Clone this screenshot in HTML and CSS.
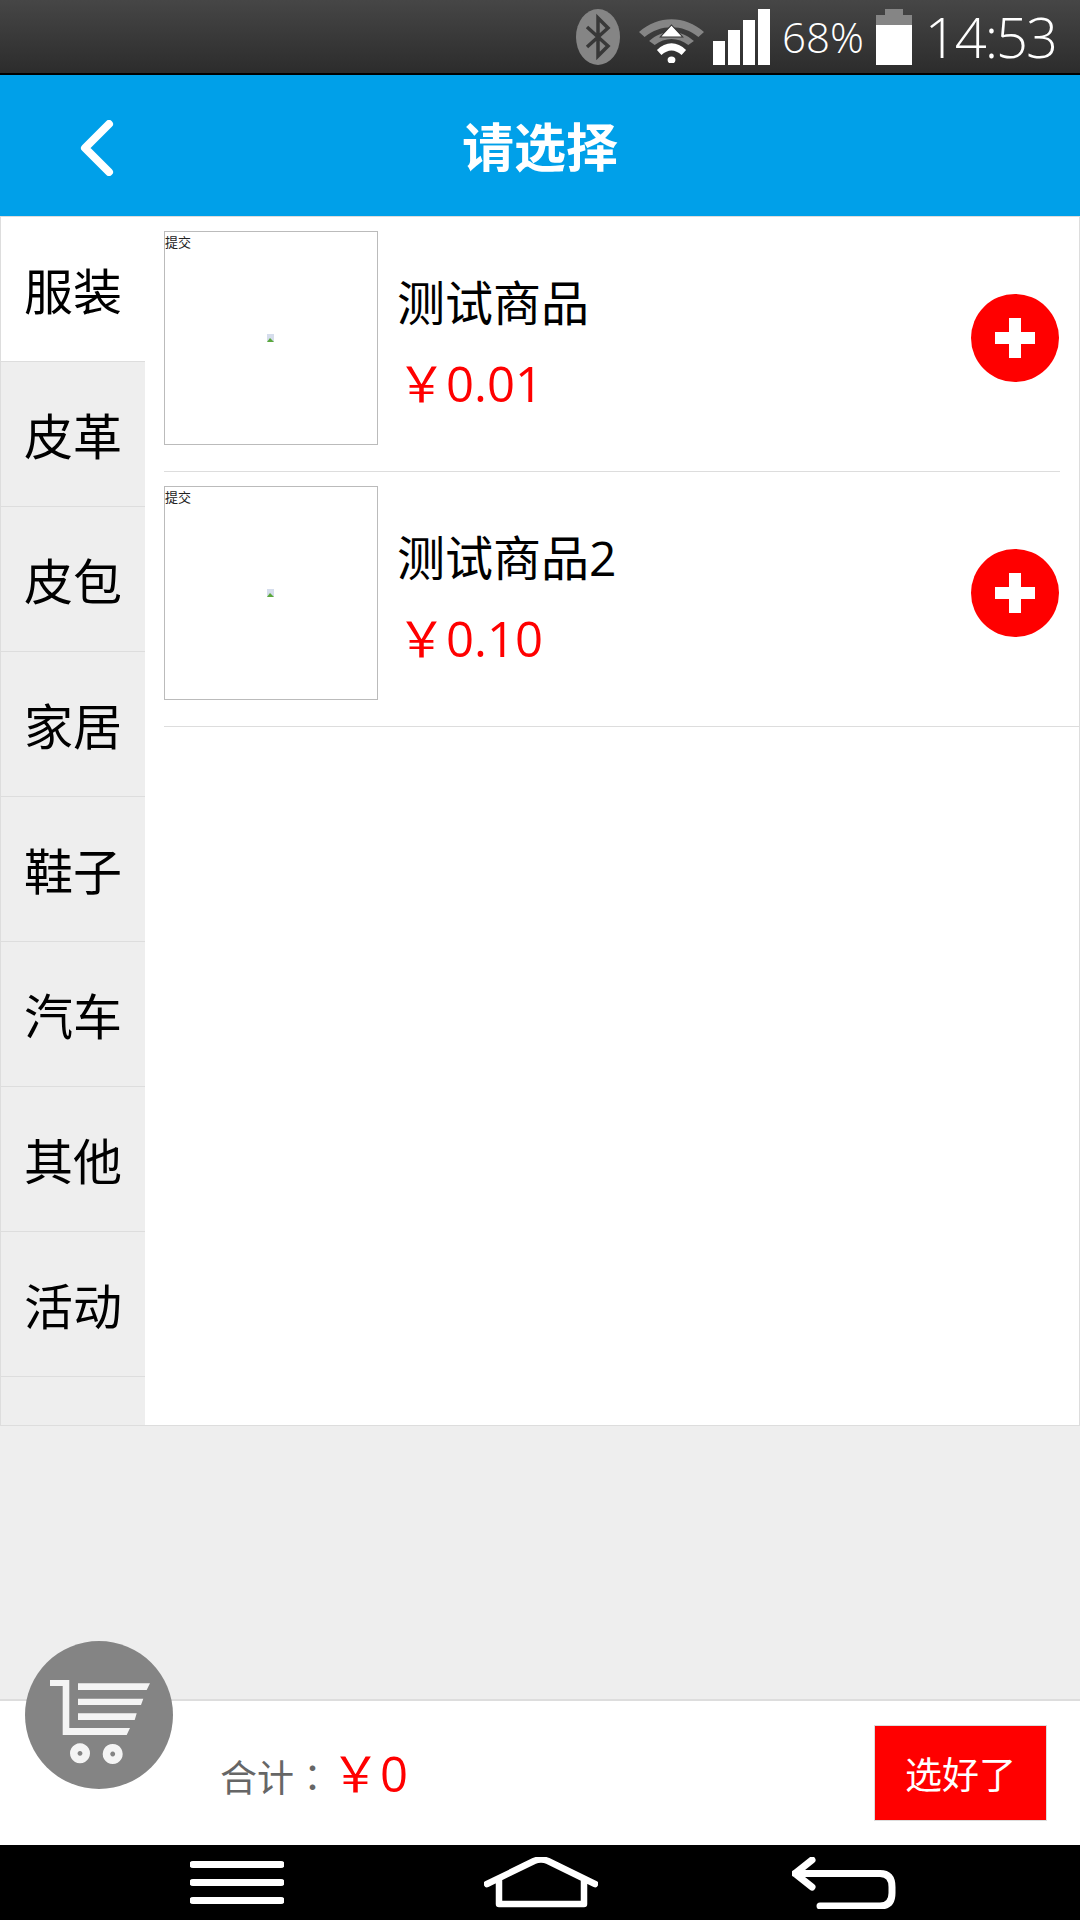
FILE: index.html
```html
<!DOCTYPE html>
<html lang="zh">
<head>
<meta charset="utf-8">
<title>请选择</title>
<link rel="stylesheet" href="styles.css">
</head>
<body>
<div class="phone">
  <div class="status">
    <svg class="ic-bt" width="44" height="56" viewBox="0 0 44 56"><ellipse cx="22" cy="28" rx="22" ry="28" fill="#858585"/><path d="M11 18 L32 37 L22 47 V9 L32 19 L11 38" fill="none" stroke="#383838" stroke-width="3.5"/></svg>
    <svg class="ic-wifi" width="65" height="47" viewBox="3 0 58 47" preserveAspectRatio="none"><path d="M3 16 C20 -1 44 -1 61 16 L56 21 C42 8 22 8 8 21Z" fill="#858585"/><path d="M12 25 C24 13 40 13 52 25 L47 29 C38 21 26 21 17 29Z" fill="#858585"/><path d="M32 9 L42 21 H22Z" fill="#fff" stroke="#333" stroke-width="1"/><path d="M19 34 C27 25 37 25 45 34 L41 39 C35 33 29 33 23 39Z" fill="#fff"/><circle cx="32" cy="44" r="3.5" fill="#fff"/></svg>
    <div class="signal"><i class="b1"></i><i class="b2"></i><i class="b3"></i><i class="b4"></i></div>
    <span class="pct">68%</span>
    <svg class="ic-bat" width="36" height="56" viewBox="0 0 36 56"><path d="M9 0 H27 V6 H36 V16 H0 V6 H9Z" fill="#858585"/><rect y="16" width="36" height="40" fill="#fff"/></svg>
    <span class="time">14:53</span>
  </div>
  <header class="top">
    <svg class="back" width="34" height="56" viewBox="0 0 34 56"><path d="M29 4 L5 28 L29 52" fill="none" stroke="#fff" stroke-width="8" stroke-linecap="round" stroke-linejoin="round"/></svg>
    <h1 class="title">请选择</h1>
  </header>
  <main class="main">
    <nav class="side">
      <div class="cat active">服装</div>
      <div class="cat">皮革</div>
      <div class="cat">皮包</div>
      <div class="cat">家居</div>
      <div class="cat">鞋子</div>
      <div class="cat">汽车</div>
      <div class="cat">其他</div>
      <div class="cat">活动</div>
    </nav>
    <section class="list">
      <article class="item">
        <div class="thumb"><span class="alt">提交</span><svg class="broken" width="7" height="8" viewBox="0 0 7 8"><rect width="7" height="8" fill="#d5ddec"/><path d="M0 8 L3 4 L7 8Z" fill="#5aa83c"/></svg></div>
        <div class="info"><div class="name">测试商品</div><div class="price">￥0.01</div></div>
        <div class="add"><svg width="40" height="40" viewBox="0 0 40 40"><path d="M14 0 H26 V14 H40 V26 H26 V40 H14 V26 H0 V14 H14Z" fill="#fff"/></svg></div>
      </article>
      <article class="item">
        <div class="thumb"><span class="alt">提交</span><svg class="broken" width="7" height="8" viewBox="0 0 7 8"><rect width="7" height="8" fill="#d5ddec"/><path d="M0 8 L3 4 L7 8Z" fill="#5aa83c"/></svg></div>
        <div class="info"><div class="name">测试商品2</div><div class="price">￥0.10</div></div>
        <div class="add"><svg width="40" height="40" viewBox="0 0 40 40"><path d="M14 0 H26 V14 H40 V26 H26 V40 H14 V26 H0 V14 H14Z" fill="#fff"/></svg></div>
      </article>
    </section>
  </main>
  <div class="spacer"></div>
  <footer class="foot">
    <div class="cart"><svg width="102" height="84" viewBox="0 0 102 84"><path d="M0 0 H19.3 V48 H80 L76.7 55 H12.7 V6 H0Z" fill="#f4f4f4"/><path d="M28 3.3 H100 L96.7 10 H28Z M28 18.7 H93.3 L91 25 H28Z M28 33.3 H86.7 L84.7 40 H28Z" fill="#f4f4f4"/><path fill-rule="evenodd" d="M30 63.3 a10 10 0 1 0 .01 0Z M30 71 a2.4 2.4 0 1 1 -.01 0Z M62.7 64 a10 10 0 1 0 .01 0Z M62.7 71.6 a2.4 2.4 0 1 1 -.01 0Z" fill="#f4f4f4"/></svg></div>
    <div class="total"><span class="label" lang="zh-Hant">合计：</span><span class="sum">￥0</span></div>
    <button class="done">选好了</button>
  </footer>
  <div class="nav">
    <svg width="94" height="44" viewBox="0 0 94 44"><path d="M3 3.5 H91 M3 21.5 H91 M3 39.5 H91" stroke="#fff" stroke-width="7" stroke-linecap="round"/></svg>
    <svg class="nav-home" width="114" height="52" viewBox="0 0 114 52"><path d="M3 27 L50 4 Q57 1 64 4 L111 27 M15 22 V47 H100 V22" fill="none" stroke="#fff" stroke-width="6.5" stroke-linecap="round" stroke-linejoin="round"/></svg>
    <svg width="104" height="52" viewBox="0 0 104 52"><path d="M20 3 L3 16.5 L20 30 M3 16.5 H88 Q100 16.5 100 30 V36 Q100 49 88 49 H28" fill="none" stroke="#fff" stroke-width="7" stroke-linecap="round" stroke-linejoin="round"/></svg>
  </div>
</div>
</body>
</html>
```
FILE: styles.css
```css
* { box-sizing: border-box; }
html, body { margin: 0; padding: 0; }
body { background: #eee; font-family: "Open Sans", "Noto Sans CJK SC", sans-serif; }
.phone { position: relative; width: 1080px; height: 1920px; display: flex; flex-direction: column; background: #eee; overflow: hidden; }

.status { height: 75px; flex: none; display: flex; align-items: flex-start; padding: 9px 24px 0 0; justify-content: flex-end; background: linear-gradient(#464646, #2c2c2c); border-bottom: 2px solid #000; color: #fff; }
.ic-bt { margin-right: 19px; }
.ic-wifi { margin-top: 7px; margin-right: 9px; }
.signal { display: flex; align-items: flex-end; gap: 3px; height: 56px; margin-right: 12px; }
.signal i { width: 12px; background: #fff; display: block; }
.b1 { height: 24px; }
.b2 { height: 35px; }
.b3 { height: 45px; }
.b4 { height: 56px; }
.pct { font-size: 42px; line-height: 56px; font-weight: 300; margin-right: 12px; }
.ic-bat { margin-right: 13px; }
.time { font-size: 56px; line-height: 54px; font-weight: 300; letter-spacing: -2px; }

.top { height: 141px; flex: none; background: #00a0e9; display: flex; align-items: center; justify-content: center; position: relative; padding-bottom: 2px; }
.back { position: absolute; left: 80px; top: 45px; }
.title { margin: 0; font-size: 52px; font-weight: 700; color: #fff; }

.main { height: 1210px; flex: none; display: flex; background: #fff; border: 1px solid #ddd; overflow: hidden; }
.side { width: 144px; flex: none; background: #eee; }
.cat { height: 145px; display: flex; align-items: center; justify-content: center; font-size: 49px; color: #000; border-bottom: 1px solid #ddd; padding-bottom: 2px; }
.cat.active { background: #fff; }

.list { flex: 1; padding-left: 19px; }
.item { height: 255px; display: flex; align-items: flex-start; padding: 14px 20px 0 0; border-bottom: 1px solid #ddd; }
.item:first-child { margin-right: 19px; padding-right: 1px; }
.thumb { position: relative; width: 214px; height: 214px; border: 1px solid #bbb; flex: none; }
.alt { display: block; font-size: 13px; line-height: 20px; color: #222; }
.broken { position: absolute; left: 102px; top: 102px; }
.info { flex: 1; margin-left: 19px; padding-top: 40px; }
.name { font-size: 48px; line-height: 64px; color: #000; }
.price { font-size: 49px; line-height: 64px; color: #f00; margin-top: 16px; }
.add { width: 88px; height: 88px; flex: none; margin-top: 63px; border-radius: 50%; background: #f00; display: flex; align-items: center; justify-content: center; }

.spacer { height: 273px; flex: none; }
.foot { position: relative; height: 146px; flex: none; background: #fff; border-top: 2px solid #ddd; display: flex; align-items: center; padding: 0 33px 0 220px; justify-content: space-between; }
.cart { position: absolute; left: 25px; top: -60px; width: 148px; height: 148px; border-radius: 50%; background: #848484; padding: 39px 0 0 25px; }
.cart svg { display: block; }
.total { display: flex; align-items: baseline; padding-bottom: 6px; }
.label { font-family: "Noto Sans CJK TC", sans-serif; font-size: 37px; color: #666; }
.sum { font-size: 49px; color: #f00; }
.done { width: 173px; height: 96px; background: #f00; border: 1px solid #ddd; color: #fff; font: inherit; font-size: 37px; padding: 0; }

.nav { height: 75px; flex: none; background: #000; display: flex; align-items: center; padding: 0 184px 0 190px; justify-content: space-between; }
.nav-home { margin-left: 6px; }
```
